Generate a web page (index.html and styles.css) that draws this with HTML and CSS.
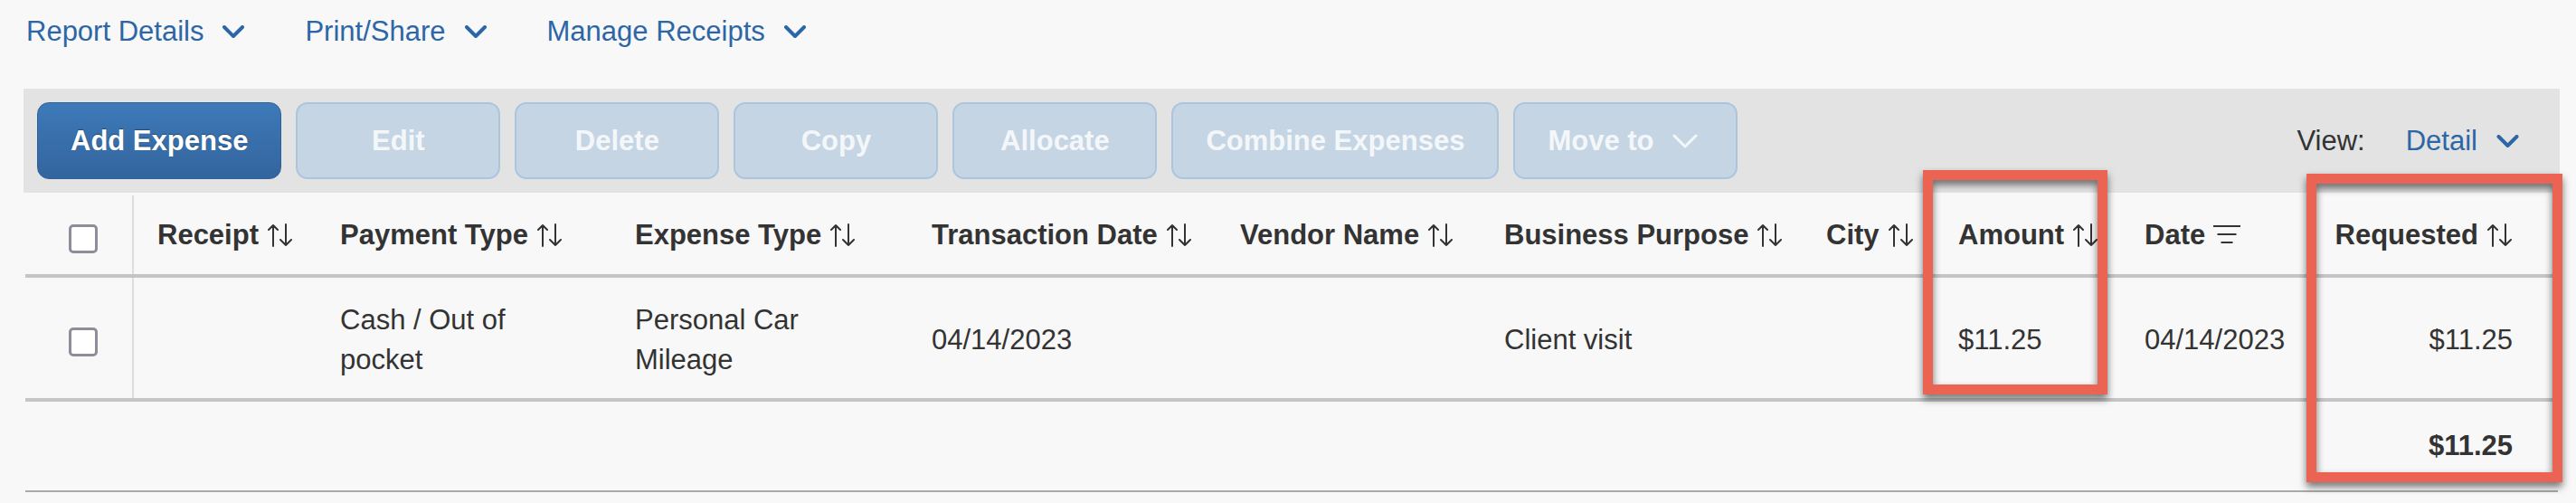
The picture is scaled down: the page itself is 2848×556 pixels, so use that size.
FILE: index.html
```html
<!DOCTYPE html>
<html lang="en">
<head>
<meta charset="utf-8">
<title>Expense Report</title>
<link rel="stylesheet" href="styles.css">
</head>
<body>
<div class="page">
  <nav class="topnav">
    <a class="navlink">Report Details<svg class="chev" viewBox="0 0 24 14"><path d="M2 2 L12 12 L22 2"/></svg></a>
    <a class="navlink">Print/Share<svg class="chev" viewBox="0 0 24 14"><path d="M2 2 L12 12 L22 2"/></svg></a>
    <a class="navlink">Manage Receipts<svg class="chev" viewBox="0 0 24 14"><path d="M2 2 L12 12 L22 2"/></svg></a>
  </nav>

  <div class="toolbar">
    <div class="actions">
      <button class="btn btn-primary">Add Expense</button>
      <button class="btn btn-disabled">Edit</button>
      <button class="btn btn-disabled">Delete</button>
      <button class="btn btn-disabled">Copy</button>
      <button class="btn btn-disabled">Allocate</button>
      <button class="btn btn-disabled">Combine Expenses</button>
      <button class="btn btn-disabled btn-move">Move to<svg class="chev-thin" viewBox="0 0 28 16"><path d="M2 2 L14 14 L26 2"/></svg></button>
    </div>
    <div class="view">
      <span class="view-label">View:</span>
      <a class="navlink navlink-view">Detail<svg class="chev" viewBox="0 0 24 14"><path d="M2 2 L12 12 L22 2"/></svg></a>
    </div>
  </div>

  <div class="table-wrap">
    <table class="expenses">
      <colgroup>
        <col class="c-check"><col class="c-receipt"><col class="c-payment"><col class="c-expense"><col class="c-trans"><col class="c-vendor"><col class="c-purpose"><col class="c-city"><col class="c-amount"><col class="c-date"><col class="c-requested">
      </colgroup>
      <thead>
        <tr>
          <th class="cell-check"><span class="checkbox"></span></th>
          <th>Receipt<svg class="sort" viewBox="0 0 31 26"><path d="M9 25 V2 M4 7 L9 2 L14 7 M23 1 V24 M17 18 L23 24 L29 18"/></svg></th>
          <th>Payment Type<svg class="sort" viewBox="0 0 31 26"><path d="M9 25 V2 M4 7 L9 2 L14 7 M23 1 V24 M17 18 L23 24 L29 18"/></svg></th>
          <th>Expense Type<svg class="sort" viewBox="0 0 31 26"><path d="M9 25 V2 M4 7 L9 2 L14 7 M23 1 V24 M17 18 L23 24 L29 18"/></svg></th>
          <th>Transaction Date<svg class="sort" viewBox="0 0 31 26"><path d="M9 25 V2 M4 7 L9 2 L14 7 M23 1 V24 M17 18 L23 24 L29 18"/></svg></th>
          <th>Vendor Name<svg class="sort" viewBox="0 0 31 26"><path d="M9 25 V2 M4 7 L9 2 L14 7 M23 1 V24 M17 18 L23 24 L29 18"/></svg></th>
          <th>Business Purpose<svg class="sort" viewBox="0 0 31 26"><path d="M9 25 V2 M4 7 L9 2 L14 7 M23 1 V24 M17 18 L23 24 L29 18"/></svg></th>
          <th>City<svg class="sort" viewBox="0 0 31 26"><path d="M9 25 V2 M4 7 L9 2 L14 7 M23 1 V24 M17 18 L23 24 L29 18"/></svg></th>
          <th>Amount<svg class="sort" viewBox="0 0 31 26"><path d="M9 25 V2 M4 7 L9 2 L14 7 M23 1 V24 M17 18 L23 24 L29 18"/></svg></th>
          <th>Date<svg class="filter" viewBox="0 0 30 22"><path d="M0 2 H30 M4.5 11 H25.5 M8.5 20 H21.5"/></svg></th>
          <th class="num">Requested<svg class="sort" viewBox="0 0 31 26"><path d="M9 25 V2 M4 7 L9 2 L14 7 M23 1 V24 M17 18 L23 24 L29 18"/></svg></th>
        </tr>
      </thead>
      <tbody>
        <tr>
          <td class="cell-check"><span class="checkbox"></span></td>
          <td></td>
          <td>Cash / Out of pocket</td>
          <td>Personal Car Mileage</td>
          <td>04/14/2023</td>
          <td></td>
          <td>Client visit</td>
          <td></td>
          <td>$11.25</td>
          <td>04/14/2023</td>
          <td class="num">$11.25</td>
        </tr>
      </tbody>
      <tfoot>
        <tr>
          <td colspan="10"></td>
          <td class="num total">$11.25</td>
        </tr>
      </tfoot>
    </table>
  </div>

  <div class="highlight hl-amount"></div>
  <div class="highlight hl-requested"></div>
</div>
</body>
</html>
```

FILE: styles.css
```css
* { box-sizing: border-box; }

html, body {
  margin: 0;
  padding: 0;
  background: #f8f8f8;
}

body {
  font-family: "Liberation Sans", Helvetica, Arial, sans-serif;
  font-size: 31px;
  color: #333333;
}

.page {
  position: relative;
  width: 2848px;
  height: 556px;
  overflow: hidden;
}

/* top navigation */
.topnav {
  display: flex;
  align-items: flex-start;
  gap: 67px;
  padding: 17px 0 0 29px;
  height: 98px;
  line-height: 36px;
}

.navlink {
  display: inline-flex;
  align-items: center;
  gap: 21px;
  color: #2d66a6;
  text-decoration: none;
  white-space: nowrap;
}

.chev {
  width: 24px;
  height: 14px;
  fill: none;
  stroke: #2d66a6;
  stroke-width: 4;
  stroke-linecap: round;
  stroke-linejoin: round;
}

/* toolbar */
.toolbar {
  margin-left: 26px;
  width: 2804px;
  height: 115px;
  background: #e2e3e2;
  display: flex;
  align-items: center;
  justify-content: space-between;
  padding: 0 45px 0 15px;
}

.actions {
  display: flex;
  gap: 16px;
}

.btn {
  height: 85px;
  min-width: 226px;
  padding: 0 36px;
  border-radius: 13px;
  font-family: inherit;
  font-size: 31px;
  font-weight: bold;
  display: inline-flex;
  align-items: center;
  justify-content: center;
  white-space: nowrap;
}

.btn-primary {
  color: #ffffff;
  background: linear-gradient(#3d79b9, #33659d);
  border: 1px solid #2f6199;
  text-shadow: 0 -1px 1px rgba(0, 0, 0, 0.35);
}

.btn-disabled {
  color: #f4f7fa;
  background: #c5d5e4;
  border: 2px solid #abc5de;
}

.btn-move {
  padding-right: 42px;
}

.chev-thin {
  width: 28px;
  height: 16px;
  margin-left: 20px;
  fill: none;
  stroke: #f4f7fa;
  stroke-width: 3;
  stroke-linecap: round;
  stroke-linejoin: round;
}

.view {
  display: flex;
  align-items: center;
  gap: 45px;
}

.view-label {
  color: #333333;
}

.navlink-view .chev {
  width: 25px;
}

/* table */
.table-wrap {
  padding: 3px 0 0 28px;
}

.expenses {
  width: 2800px;
  table-layout: fixed;
  border-collapse: collapse;
}

.c-check { width: 119px; }
.c-receipt { width: 203px; }
.c-payment { width: 326px; }
.c-expense { width: 328px; }
.c-trans { width: 341px; }
.c-vendor { width: 292px; }
.c-purpose { width: 356px; }
.c-city { width: 146px; }
.c-amount { width: 206px; }
.c-date { width: 208px; }
.c-requested { width: 275px; }

.expenses th,
.expenses td {
  padding: 0 26px;
  text-align: left;
  vertical-align: middle;
  line-height: 44px;
}

.expenses th {
  height: 89px;
  font-weight: bold;
  white-space: nowrap;
  border-bottom: 4px solid #c4c5c6;
}

.expenses tbody td {
  height: 137px;
  padding-top: 4px;
  border-bottom: 4px solid #c4c5c6;
}

.expenses tfoot td {
  height: 101px;
  border-bottom: 2px solid #a9a9aa;
}

.expenses .cell-check {
  padding: 6px 0 0 48px;
  border-right: 2px solid #dddddd;
}

.expenses .num {
  text-align: right;
  padding-right: 50px;
}

.total {
  font-weight: bold;
}

.checkbox {
  display: inline-block;
  width: 32px;
  height: 32px;
  background: #ffffff;
  border: 3px solid #8e8d99;
  border-radius: 5px;
  vertical-align: middle;
}

.sort {
  width: 31px;
  height: 26px;
  margin-left: 7px;
  vertical-align: -3px;
  fill: none;
  stroke: #333333;
  stroke-width: 2;
  stroke-linecap: round;
  stroke-linejoin: round;
}

.filter {
  width: 30px;
  height: 22px;
  margin-left: 9px;
  vertical-align: 0;
  fill: none;
  stroke: #333333;
  stroke-width: 2;
}

/* annotation boxes */
.highlight {
  position: absolute;
  border: 11px solid #eb6352;
  filter: drop-shadow(0 5px 4px rgba(0, 0, 0, 0.55));
}

.hl-amount {
  left: 2126px;
  top: 188px;
  width: 204px;
  height: 248px;
}

.hl-requested {
  left: 2550px;
  top: 192px;
  width: 283px;
  height: 341px;
}
```
